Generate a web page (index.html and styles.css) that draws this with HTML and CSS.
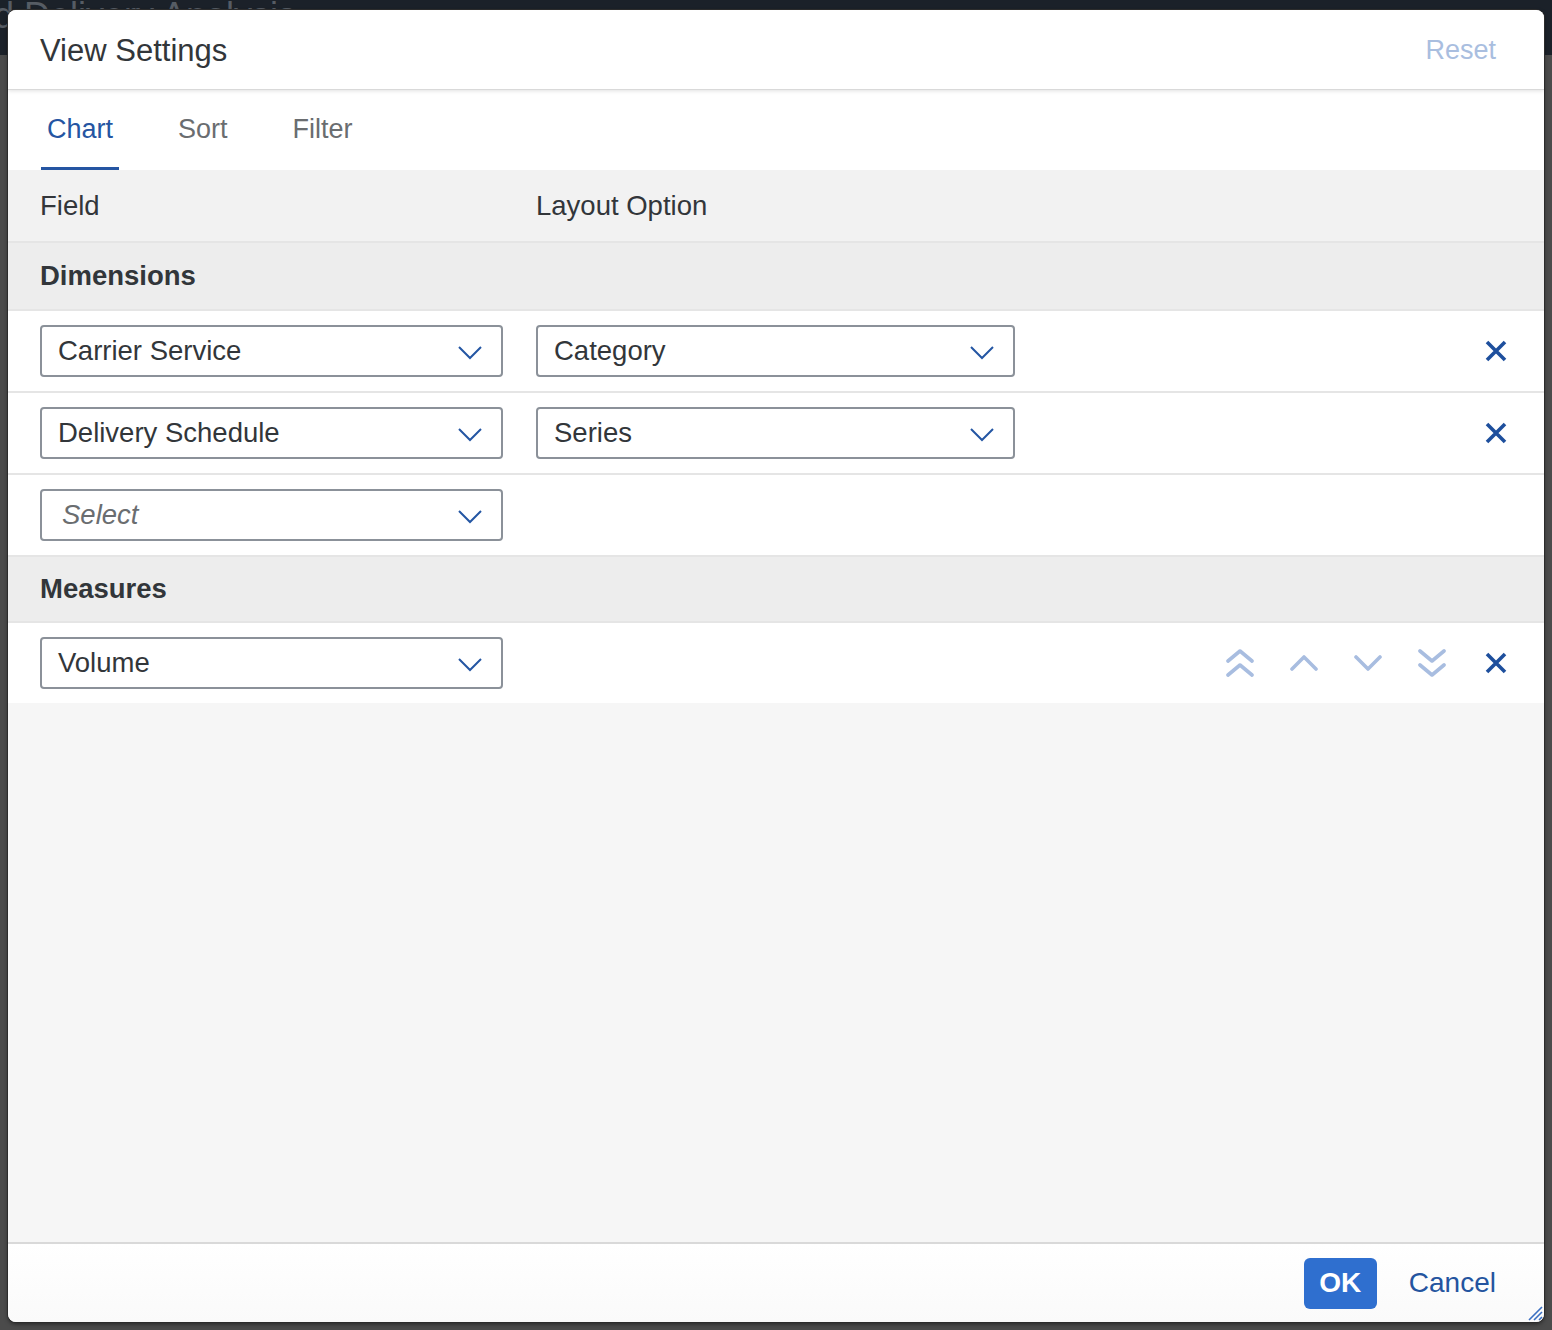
FILE: index.html
```html
<!DOCTYPE html>
<html lang="en">
<head>
    <meta charset="UTF-8">
    <title>View Settings</title>
    <link rel="stylesheet" href="styles.css">
</head>
<body>
    <div class="page">
        <div class="shellbar">
            <span class="app-title">d Delivery Analysis &#8964;</span>
        </div>
        <div class="page-body"></div>
    </div>

    <div class="dialog">
        <div class="dlg-header">
            <span class="dlg-title">View Settings</span>
            <button class="reset" disabled>Reset</button>
        </div>

        <div class="tabs">
            <div class="tab active">Chart</div>
            <div class="tab">Sort</div>
            <div class="tab">Filter</div>
        </div>

        <div class="content">
            <div class="row head">
                <span>Field</span>
                <span>Layout Option</span>
            </div>

            <div class="row group">Dimensions</div>

            <div class="row item">
                <div class="select"><span>Carrier Service</span>
                    <svg class="caret" viewBox="0 0 24 14"><polyline points="1,1 12,12 23,1"/></svg></div>
                <div class="select"><span>Category</span>
                    <svg class="caret" viewBox="0 0 24 14"><polyline points="1,1 12,12 23,1"/></svg></div>
                <div class="actions">
                    <button class="icon"><svg class="x" viewBox="0 0 22 22"><path d="M2 2L20 20M20 2L2 20"/></svg></button>
                </div>
            </div>

            <div class="row item">
                <div class="select"><span>Delivery Schedule</span>
                    <svg class="caret" viewBox="0 0 24 14"><polyline points="1,1 12,12 23,1"/></svg></div>
                <div class="select"><span>Series</span>
                    <svg class="caret" viewBox="0 0 24 14"><polyline points="1,1 12,12 23,1"/></svg></div>
                <div class="actions">
                    <button class="icon"><svg class="x" viewBox="0 0 22 22"><path d="M2 2L20 20M20 2L2 20"/></svg></button>
                </div>
            </div>

            <div class="row item">
                <div class="select"><span class="placeholder">Select</span>
                    <svg class="caret" viewBox="0 0 24 14"><polyline points="1,1 12,12 23,1"/></svg></div>
            </div>

            <div class="row group measures">Measures</div>

            <div class="row item">
                <div class="select"><span>Volume</span>
                    <svg class="caret" viewBox="0 0 24 14"><polyline points="1,1 12,12 23,1"/></svg></div>
                <div></div>
                <div class="actions">
                    <button class="icon"><svg class="mv dbl" viewBox="0 0 28 28"><polyline points="2,12 14,2 26,12"/><polyline points="2,26 14,16 26,26"/></svg></button>
                    <button class="icon"><svg class="mv" viewBox="0 0 28 16"><polyline points="2,14 14,2 26,14"/></svg></button>
                    <button class="icon"><svg class="mv" viewBox="0 0 28 16"><polyline points="2,2 14,14 26,2"/></svg></button>
                    <button class="icon"><svg class="mv dbl" viewBox="0 0 28 28"><polyline points="2,2 14,12 26,2"/><polyline points="2,16 14,26 26,16"/></svg></button>
                    <button class="icon"><svg class="x" viewBox="0 0 22 22"><path d="M2 2L20 20M20 2L2 20"/></svg></button>
                </div>
            </div>
        </div>

        <div class="dlg-footer">
            <button class="ok">OK</button>
            <button class="cancel">Cancel</button>
            <svg class="grip" viewBox="0 0 16 16"><path d="M15 2L2 15M15 7L7 15M15 12L12 15"/></svg>
        </div>
    </div>
</body>
</html>
```

FILE: styles.css
```css
*{
    box-sizing: border-box;
}
body{
    margin: 0;
    background-color: #4b4b4b;
    font-family: "Liberation Sans", Arial, sans-serif;
    color: #32363a;
    overflow: hidden;
}
button{
    font-family: inherit;
    border: none;
    background: none;
    padding: 0;
    cursor: pointer;
}

/* page behind the dialog */
.page{
    height: 1330px;
}
.shellbar{
    height: 55px;
    background-color: #1b2129;
    overflow: hidden;
}
.app-title{
    display: block;
    margin-left: -6px;
    margin-top: -4px;
    font-size: 36px;
    line-height: 40px;
    color: #565c64;
    white-space: nowrap;
}
.page-body{
    height: 1275px;
    background-color: #4b4b4b;
}

/* dialog */
.dialog{
    position: absolute;
    left: 8px;
    top: 10px;
    width: 1536px;
    height: 1312px;
    display: flex;
    flex-direction: column;
    background-color: #f6f6f6;
    border-radius: 8px;
    overflow: hidden;
    box-shadow: 0 0 0 1px #2c2c2c, 0 2px 4px rgba(0,0,0,0.5);
}
.dlg-header{
    height: 79px;
    flex: none;
    display: flex;
    align-items: center;
    justify-content: space-between;
    padding: 0 48px 0 32px;
    background-color: #fff;
    position: relative;
    z-index: 1;
    box-shadow: 0 1px 0 #d9d9d9, 0 2px 4px rgba(0,0,0,0.12);
}
.dlg-title{
    font-size: 31px;
    padding-top: 2px;
}
.reset{
    font-size: 27px;
    color: #a9bedf;
    padding-top: 2px;
}

.tabs{
    height: 81px;
    flex: none;
    display: flex;
    align-items: stretch;
    gap: 53px;
    padding-left: 33px;
    background-color: #fff;
}
.tab{
    display: flex;
    align-items: center;
    padding: 3px 6px 0;
    font-size: 27px;
    color: #6a6d70;
    border-bottom: 3px solid transparent;
}
.tab.active{
    color: #2555a2;
    border-bottom-color: #2555a2;
    border-radius: 2px 2px 0 0;
}

.content{
    flex: 1;
    background-color: #f6f6f6;
}
.row{
    display: grid;
    grid-template-columns: 463px 479px 1fr;
    column-gap: 33px;
    align-items: center;
    padding-left: 32px;
    font-size: 27.5px;
    border-bottom: 2px solid #e5e5e5;
}
.row.head{
    height: 73px;
    background-color: #f2f2f2;
}
.row.group{
    display: flex;
    height: 68px;
    background-color: #ededed;
    font-weight: bold;
    font-size: 27.5px;
}
.row.group.measures{
    height: 66px;
}
.row.item{
    height: 82px;
    background-color: #fff;
}
.row.item:last-child{
    height: 80px;
    border-bottom: none;
}

.select{
    height: 52px;
    display: flex;
    align-items: center;
    justify-content: space-between;
    padding: 0 19px 0 16px;
    border: 2px solid #8b9199;
    border-radius: 4px;
    background-color: #fff;
}
.placeholder{
    font-style: italic;
    color: #6a6d70;
    padding-left: 4px;
}
.caret{
    width: 24px;
    height: 14px;
    margin-top: 4px;
    fill: none;
    stroke: #2456a3;
    stroke-width: 2;
}

.actions{
    display: flex;
    justify-content: flex-end;
    padding-right: 16px;
}
.icon{
    width: 64px;
    height: 51px;
    display: flex;
    align-items: center;
    justify-content: center;
}
.x{
    width: 22px;
    height: 22px;
    fill: none;
    stroke: #1e4f9d;
    stroke-width: 3.6;
}
.mv{
    width: 28px;
    height: 16px;
    fill: none;
    stroke: #a8bde0;
    stroke-width: 3.6;
    stroke-linecap: round;
    stroke-linejoin: round;
}
.mv.dbl{
    height: 28px;
}

.dlg-footer{
    height: 80px;
    flex: none;
    display: flex;
    align-items: center;
    justify-content: flex-end;
    gap: 32px;
    padding-right: 48px;
    border-top: 2px solid #d9d9d9;
    background: linear-gradient(#fff, #fafafa);
    position: relative;
}
.ok{
    width: 73px;
    height: 51px;
    border-radius: 6px;
    background-color: #2f6fcf;
    color: #fff;
    font-size: 28px;
    font-weight: bold;
}
.cancel{
    font-size: 28px;
    color: #24549f;
}
.grip{
    position: absolute;
    right: 1px;
    bottom: 1px;
    width: 16px;
    height: 16px;
    fill: none;
    stroke: #3a6fc2;
    stroke-width: 1.6;
}
```
